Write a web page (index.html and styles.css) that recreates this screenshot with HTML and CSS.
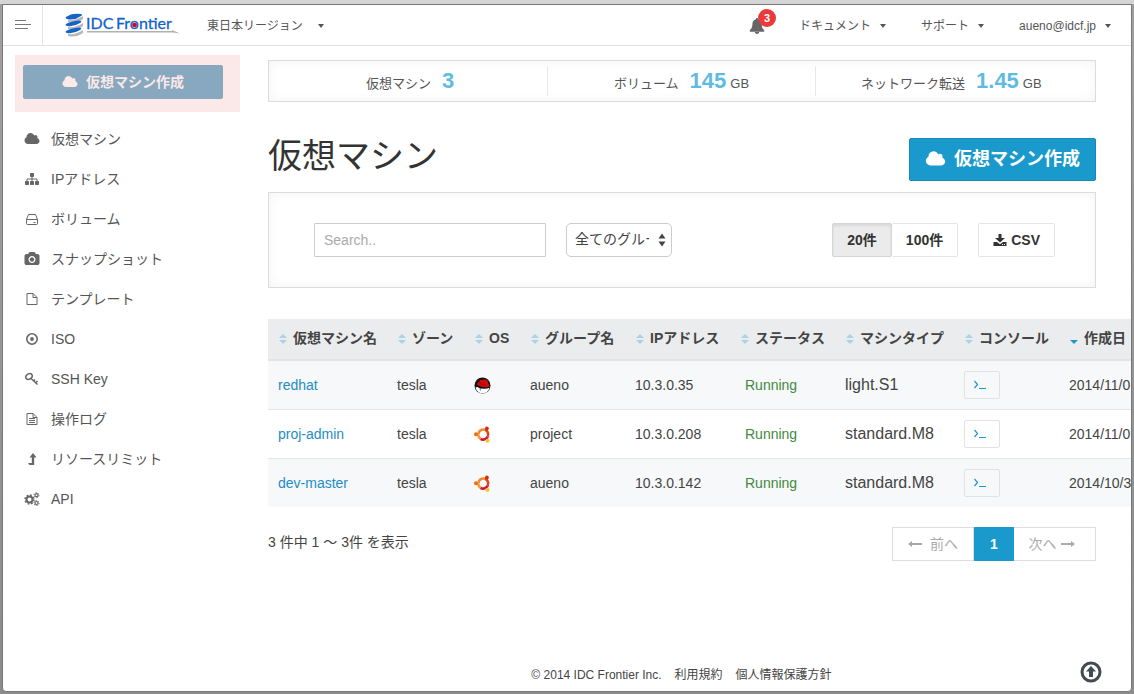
FILE: index.html
```html
<!DOCTYPE html>
<html lang="ja">
<head>
<meta charset="utf-8">
<title>仮想マシン</title>
<link rel="stylesheet" href="styles.css">
</head>
<body>
<svg class="defs" aria-hidden="true">
  <symbol id="cloud" viewBox="0 0 2048 1792"><path d="M1984 1152q0 159-112.500 271.500t-271.500 112.500h-1088q-185 0-316.500-131.500t-131.500-316.500q0-132 71-241.500t187-163.500q-2-28-2-43 0-212 150-362t362-150q158 0 286.500 88t187.500 230q70-62 166-62 106 0 181 75t75 181q0 75-41 138 129 30 213 134.500t84 239.500z"/></symbol>
  <symbol id="redhat" viewBox="0 0 17 17"><circle cx="8.500" cy="8.500" r="8" fill="#111"/><path d="M1.500 10.500q2-1 3.500.5 1.500 1 3.500.5 3 1 7-.8Q14 16.300 8.500 16.300 3 16.300 1.500 10.500z" fill="#fff"/><path d="M5.500 12l1.500.7-.5 1z" fill="#111"/><path d="M3 7.500Q3 5.500 5 5q.5-3 3.500-2 2-1.500 4-.2 2 1 1.800 3.700 1.500 1.500.7 3.200-2.500 1-6 .3Q4.500 9 3 7.500z" fill="#d20a0a"/><path d="M5 5.500q2.500 2.500 6.500 2.500" stroke="#8b0000" stroke-width=".6" fill="none"/></symbol>
  <symbol id="ubuntu" viewBox="0 0 17 17"><g fill="none" stroke-width="2.600"><path d="M4.300 8.500A5 5 0 0 1 11 3.800" stroke="#f08a2a"/><path d="M11 3.800A5 5 0 0 1 13.800 10.500" stroke="#d9481c"/><path d="M13.800 10.500A5 5 0 0 1 6.500 12.800" stroke="#dd1030"/><path d="M6.500 12.800A5 5 0 0 1 4.300 8.500" stroke="#f0a030"/></g><circle cx="2" cy="8.300" r="2" fill="#ec6a1c"/><circle cx="12.900" cy="2.400" r="1.900" fill="#d62a18"/><circle cx="13.500" cy="14.800" r="2" fill="#f5c02a"/></symbol>
  <symbol id="sort" viewBox="0 0 8 12"><path d="M0 5L4 1l4 4zM0 7h8l-4 4z"/></symbol>
  <symbol id="prompt" viewBox="0 0 14 12"><path d="M1.500 2l3 3.500-3 3.500M6 9.500h7" fill="none" stroke="currentColor" stroke-width="1.200"/></symbol>
</svg>
<div class="window">
  <header class="topbar">
    <button class="burger" aria-label="メニュー"><svg width="16" height="10" viewBox="0 0 16 10" stroke="#777"><path d="M0 .5h11M0 4.500h16M0 8.500h13"/></svg></button>
    <a class="logo" href="#" aria-label="IDC Frontier">
      <svg width="116" height="24" viewBox="0 0 116 24">
        <path d="M3 7q7 1 15-4v3q-7 6-15 3zM3 14q8 1 15-4v3q-7 6-15 3zM3 21q8 1 15-4v3q-7 5-15 3z" fill="#b8b8b8"/>
        <path d="M1 4Q7-.5 16 1q2 1 0 2Q9 8 2 6 0 5 1 4zM1 11q5-3 13-3.500 4 .5 1 2.500-6 4-13 3-2-1-1-2zM1 18q5-3 13-3.500 4 .5 1 2.500-6 4-13 3-2-1-1-2z" fill="#1463c8"/>
        <path d="M22 18h85v-1l8 3.500-7-1H22z" fill="#b0b0b0"/>
        <text class="logo-text" y="16"><tspan x="21">IDC</tspan><tspan x="51">Frontier</tspan></text>
        <circle cx="69.500" cy="12" r="2.300" fill="#e60012"/>
      </svg>
    </a>
    <button class="nav region">東日本リージョン<span class="caret"></span></button>
    <nav class="right-nav">
      <button class="bell" aria-label="通知 3"><svg width="16" height="16" viewBox="0 0 14 14" fill="#666"><path d="M7 0q1 0 1 1.200 3 .8 3 4.300 0 3.500 2.300 5v1.500H.7V10.500Q3 9 3 5.500 3 2 6 1.200 6 0 7 0zM5 12.300h4Q8.500 14 7 14t-2-1.700z"/></svg><span class="badge">3</span></button>
      <button class="nav">ドキュメント<span class="caret"></span></button>
      <button class="nav">サポート<span class="caret"></span></button>
      <button class="nav">aueno@idcf.jp<span class="caret"></span></button>
    </nav>
  </header>
  <div class="layout">
    <aside class="sidebar">
      <div class="highlight"><button class="side-create"><svg width="16" height="14"><use href="#cloud"/></svg>仮想マシン作成</button></div>
      <nav class="menu">
        <a href="#"><svg><use href="#cloud"/></svg>仮想マシン</a>
        <a href="#"><svg viewBox="0 0 1792 1792"><path d="M1792 1248v320q0 40-28 68t-68 28h-320q-40 0-68-28t-28-68v-320q0-40 28-68t68-28h96v-192h-512v192h96q40 0 68 28t28 68v320q0 40-28 68t-68 28h-320q-40 0-68-28t-28-68v-320q0-40 28-68t68-28h96v-192h-512v192h96q40 0 68 28t28 68v320q0 40-28 68t-68 28h-320q-40 0-68-28t-28-68v-320q0-40 28-68t68-28h96v-192q0-52 38-90t90-38h512v-192h-96q-40 0-68-28t-28-68v-320q0-40 28-68t68-28h320q40 0 68 28t28 68v320q0 40-28 68t-68 28h-96v192h512q52 0 90 38t38 90v192h96q40 0 68 28t28 68z"/></svg>IPアドレス</a>
        <a href="#"><svg viewBox="0 0 15 14"><g class="line"><path d="M2 7.500L4 2.500h7l2 5v4q0 1-1 1H3q-1 0-1-1zM2 7.500h11M9 10.500h2"/></g></svg>ボリューム</a>
        <a href="#"><svg viewBox="-64 0 1920 1792"><path fill-rule="evenodd" d="M896 672q119 0 203.500 84.500t84.500 203.500-84.500 203.500-203.500 84.500-203.500-84.500-84.500-203.500 84.500-203.500 203.500-84.500zm704-416q106 0 181 75t75 181v896q0 106-75 181t-181 75h-1408q-106 0-181-75t-75-181v-896q0-106 75-181t181-75h224l51-136q19-49 69.500-84.500t103.500-35.500h512q53 0 103.500 35.500t69.500 84.500l51 136h224zm-704 1152q185 0 316.500-131.500t131.500-316.500-131.500-316.500-316.500-131.500-316.500 131.500-131.500 316.500 131.500 316.500 316.500 131.500z"/></svg>スナップショット</a>
        <a href="#"><svg viewBox="0 0 15 14"><g class="line"><path d="M2.500 1.500h6l4 4v7h-10zM8.500 1.500v4h4"/></g></svg>テンプレート</a>
        <a href="#"><svg viewBox="0 0 15 14"><circle cx="7.500" cy="7" r="5.200" fill="none" stroke="#666" stroke-width="1.600"/><circle cx="7.500" cy="7" r="1.900"/></svg>ISO</a>
        <a href="#"><svg viewBox="0 0 15 14"><g class="line key"><ellipse cx="4.500" cy="4.500" rx="3.400" ry="2.600" transform="rotate(-35 4.500 4.500)"/><path d="M6.500 6.500l6.500 6M9 9l1.500-1.500M11 11l2-2"/></g></svg>SSH Key</a>
        <a href="#"><svg viewBox="0 0 15 14"><g class="line"><path d="M2.500 1.500h6l4 4v7h-10zM8.500 1.500v4h4M4.500 6.500h6M4.500 8.500h6M4.500 10.500h6"/></g></svg>操作ログ</a>
        <a href="#"><svg viewBox="0 0 15 14"><path d="M8.500 1l3.500 4.500H9.700v7.500H5l-1.500-2h3.800V5.500H5z"/></svg>リソースリミット</a>
        <a href="#"><svg viewBox="0 0 15 14"><g fill="none" stroke="#666"><circle cx="5" cy="7.500" r="3" stroke-width="2"/><circle cx="5" cy="7.500" r="4.500" stroke-width="1.400" stroke-dasharray="1.770"/><circle cx="12" cy="3.200" r="1.500" stroke-width="1.200"/><circle cx="12" cy="3.200" r="2.500" stroke-dasharray="1.300"/><circle cx="12" cy="11" r="1.500" stroke-width="1.200"/><circle cx="12" cy="11" r="2.500" stroke-dasharray="1.300"/></g></svg>API</a>
      </nav>
    </aside>
    <main>
      <section class="stats panel">
        <div>仮想マシン<b>3</b></div>
        <div>ボリューム<b>145</b>GB</div>
        <div>ネットワーク転送<b>1.45</b>GB</div>
      </section>
      <div class="heading">
        <h1>仮想マシン</h1>
        <button class="create"><svg width="21" height="18"><use href="#cloud"/></svg>仮想マシン作成</button>
      </div>
      <section class="filters panel">
        <input class="search" type="text" placeholder="Search.." aria-label="Search">
        <div class="select-wrap"><select aria-label="グループ"><option>全てのグループ</option></select><svg width="8" height="14" viewBox="0 0 8 14" fill="#444"><path d="M.5 5.500L4 .5l3.500 5zM.5 8.500h7L4 13.500z"/></svg></div>
        <div class="sizes"><button class="active">20件</button><button>100件</button></div>
        <button class="csv"><svg width="14" height="14" viewBox="0 0 14 14" fill="#333"><path d="M5.500 1h3v4H12L7 9.500 2 5h3.500z"/><path fill-rule="evenodd" d="M.5 9H4l3 2.300L10 9h3.500v4H.5zM9 11v1h1v-1zM11 11v1h1v-1z"/></svg>CSV</button>
      </section>
      <div class="table-wrap">
        <table>
          <colgroup><col class="c119"><col class="c77"><col class="c56"><col class="c105"><col class="c105"><col class="c105"><col class="c119"><col class="c105"><col class="c150"></colgroup>
          <thead><tr>
            <th><svg><use href="#sort"/></svg>仮想マシン名</th><th><svg><use href="#sort"/></svg>ゾーン</th><th><svg><use href="#sort"/></svg>OS</th><th><svg><use href="#sort"/></svg>グループ名</th><th><svg><use href="#sort"/></svg>IPアドレス</th><th><svg><use href="#sort"/></svg>ステータス</th><th><svg><use href="#sort"/></svg>マシンタイプ</th><th><svg><use href="#sort"/></svg>コンソール</th><th><svg class="desc" viewBox="0 0 8 12"><path d="M0 7h8l-4 4z"/></svg>作成日</th>
          </tr></thead>
          <tbody>
            <tr><td><a href="#">redhat</a></td><td>tesla</td><td><svg class="os"><use href="#redhat"/></svg></td><td>aueno</td><td>10.3.0.35</td><td class="status">Running</td><td class="type">light.S1</td><td><button class="console" aria-label="コンソール"><svg width="14" height="12"><use href="#prompt"/></svg></button></td><td>2014/11/0</td></tr>
            <tr><td><a href="#">proj-admin</a></td><td>tesla</td><td><svg class="os"><use href="#ubuntu"/></svg></td><td>project</td><td>10.3.0.208</td><td class="status">Running</td><td class="type">standard.M8</td><td><button class="console" aria-label="コンソール"><svg width="14" height="12"><use href="#prompt"/></svg></button></td><td>2014/11/0</td></tr>
            <tr><td><a href="#">dev-master</a></td><td>tesla</td><td><svg class="os"><use href="#ubuntu"/></svg></td><td>aueno</td><td>10.3.0.142</td><td class="status">Running</td><td class="type">standard.M8</td><td><button class="console" aria-label="コンソール"><svg width="14" height="12"><use href="#prompt"/></svg></button></td><td>2014/10/3</td></tr>
          </tbody>
        </table>
      </div>
      <div class="table-foot">
        <p>3 件中 1 〜 3件 を表示</p>
        <nav class="pager">
          <a href="#"><svg width="14" height="8" viewBox="0 0 14 8"><path d="M0 4l4-3v2h10v2H4v2z"/></svg>前へ</a><a class="current" href="#">1</a><a class="next" href="#">次へ<svg width="14" height="8" viewBox="0 0 14 8"><path d="M14 4l-4-3v2H0v2h10v2z"/></svg></a>
        </nav>
      </div>
    </main>
  </div>
  <footer>
    <span>© 2014 IDC Frontier Inc.</span><a href="#">利用規約</a><a href="#">個人情報保護方針</a>
    <button class="to-top" aria-label="トップへ"><svg width="22" height="22" viewBox="0 0 22 22"><circle cx="11" cy="11" r="9" fill="none" stroke="#444a52" stroke-width="3"/><path d="M11 5l5 5.500h-3V16H9v-5.500H6z" fill="#444a52"/></svg></button>
  </footer>
</div>
</body>
</html>
```
FILE: styles.css
```css
* { box-sizing: border-box; }
body {
  margin: 0;
  min-height: 100vh;
  padding: 4px 2px 2px;
  background: linear-gradient(#d5d5d5 4px, #a0a0a0 4px, #8c8c8c);
  color: #444;
  font: 14px/20px "Liberation Sans", "Noto Sans CJK JP", sans-serif;
  display: flex;
  overflow: hidden;
}
button, input, select { font: inherit; color: inherit; margin: 0; }
button { display: inline-flex; align-items: center; justify-content: center; padding: 0; border: 0; background: none; white-space: nowrap; }
a { color: inherit; text-decoration: none; }
svg { flex: none; }
.defs { position: absolute; width: 0; height: 0; }
.window {
  flex: 1;
  min-width: 0;
  display: flex;
  flex-direction: column;
  background: #fff;
  border: 1px solid #777;
  border-radius: 0 0 4px 4px;
}
.topbar { display: flex; height: 41px; border-bottom: 1px solid #e2e2e2; color: #555; font-size: 12px; }
.burger { width: 40px; border-right: 1px solid #e5e5e5; }
.logo { display: flex; align-items: center; margin-left: 22px; }
.logo-text { font: 16px Lato, sans-serif; fill: #1463c8; stroke: #1463c8; stroke-width: 0.3; }
.nav { padding-top: 2px; }
.region { margin-left: 26px; }
.caret { margin-left: 9px; border: 3px solid transparent; border-top: 4px solid #555; border-bottom: 0; }
.region .caret { margin-left: 15px; }
.right-nav { display: flex; gap: 35px; margin-left: auto; padding-right: 20px; }
.bell { position: relative; width: 14px; padding-top: 1px; }
.badge {
  position: absolute; left: 8px; top: 4px; width: 18px; height: 18px;
  border-radius: 50%; background: #e93a3c; color: #fff; font-weight: bold; font-size: 11px; line-height: 18px; text-align: center;
}
.layout { display: flex; flex: 1; }
.sidebar { width: 265px; flex: none; padding: 9px 28px 0 12px; }
.highlight { padding: 10px 17px 13px 8px; background: #fbe8e9; }
.side-create { width: 100%; height: 34px; gap: 8px; border-radius: 2px; background: #87a8be; color: #fbe8e9; font-weight: bold; fill: currentColor; }
.menu { padding: 7px 0 0 9px; color: #555; }
.menu a { display: flex; align-items: center; height: 40px; gap: 11px; }
.menu svg { width: 16px; height: 14px; fill: #666; }
.line { fill: none; stroke: #666; stroke-width: 1; }
.line.key { stroke-width: 1.5; }
main { flex: 1; min-width: 0; padding: 14px 35px 0 0; }
.panel { border: 1px solid #dcdcdc; box-shadow: inset 0 0 12px rgba(0, 0, 0, 0.05); }
.stats { display: grid; grid-template-columns: 279fr 268fr 281fr; height: 42px; padding: 5px 0; font-size: 13px; color: #555; }
.stats div { display: flex; height: 30px; justify-content: center; align-items: baseline; line-height: 30px; }
.stats div + div { border-left: 1px solid #e8e8e8; }
.stats div:first-child { padding-left: 8px; }
.stats div:last-child { padding-right: 8px; }
.stats b { margin: 0 4px 0 11px; color: #5fbbe0; font-size: 22px; }
.heading { display: flex; justify-content: space-between; margin: 36px 0 11px; }
h1 { margin: 0; font-size: 34px; line-height: 36px; font-weight: normal; color: #333; }
.create { height: 43px; padding: 0 15px 2px; gap: 8px; border: 1px solid #1788b8; border-radius: 2px; background: #1a9acc; color: #fff; fill: #fff; font-size: 18px; font-weight: bold; }
.filters { display: flex; align-items: center; height: 96px; padding: 0 40px 0 45px; }
.search { width: 232px; height: 34px; padding: 0 9px; border: 1px solid #ccc; border-radius: 1px; background: #fff; }
.search::placeholder { color: #aaa; }
.select-wrap { position: relative; width: 106px; margin-left: 20px; }
select { display: block; width: 100%; height: 34px; padding: 0 22px 2px 8px; appearance: none; border: 1px solid #ccc; border-radius: 5px; background: #fff; }
.select-wrap svg { position: absolute; right: 6px; top: 10px; }
.sizes { display: flex; margin-left: auto; }
.sizes button, .csv { height: 34px; padding: 0 14px; border: 1px solid #e4e4e4; border-radius: 2px; background: #fff; color: #333; font-weight: bold; }
.sizes .active { border-color: #d4d4d4; background: #ebebeb; box-shadow: inset 0 2px 3px rgba(0, 0, 0, 0.08); }
.sizes button + button { border-left: 0; }
.csv { margin-left: 20px; gap: 4px; }
.table-wrap { margin: 31px -35px 0 0; overflow: hidden; }
table { width: 941px; table-layout: fixed; border-collapse: separate; border-spacing: 0; }
.c56 { width: 56px; }
.c77 { width: 77px; }
.c105 { width: 105px; }
.c119 { width: 119px; }
.c150 { width: 150px; }
th { height: 42px; padding: 0 0 2px 11px; background: #ebeced; border-bottom: 2px solid #e2e4e5; text-align: left; white-space: nowrap; }
th svg { width: 8px; height: 12px; margin-right: 6px; vertical-align: -2px; fill: #a9d2e4; }
th .desc { fill: #1a9acc; }
td { height: 49px; padding: 0 0 0 10px; border-bottom: 1px solid #e3e5e6; }
tbody tr:nth-child(odd) { background: #f6f8fa; }
tbody tr:last-child td { border-bottom: 0; height: 48px; }
td a { color: #1f8dc4; }
.os { display: block; width: 17px; height: 17px; }
.status { padding-left: 15px; color: #438a3c; }
.type { font-size: 16px; }
.console { display: flex; width: 36px; height: 28px; padding-right: 4px; border: 1px solid #e0e2e4; border-radius: 2px; color: #1a9acc; }
.table-foot { display: flex; justify-content: space-between; margin-top: 20px; }
.table-foot p { margin: 5px 0 0; }
.pager { display: flex; height: 34px; color: #aaa; fill: #aaa; line-height: 32px; }
.pager a { display: flex; align-items: center; justify-content: center; gap: 8px; width: 82px; border: 1px solid #ddd; }
.pager .next { gap: 4px; padding-right: 6px; border-left: 0; }
.pager .current { width: 40px; border-color: #1a9acc; background: #1a9acc; color: #fff; font-weight: bold; }
footer { position: relative; display: flex; justify-content: center; gap: 13px; padding: 0 0 6px 229px; font-size: 12px; }
.to-top { position: absolute; right: 29px; bottom: 8px; }
```
